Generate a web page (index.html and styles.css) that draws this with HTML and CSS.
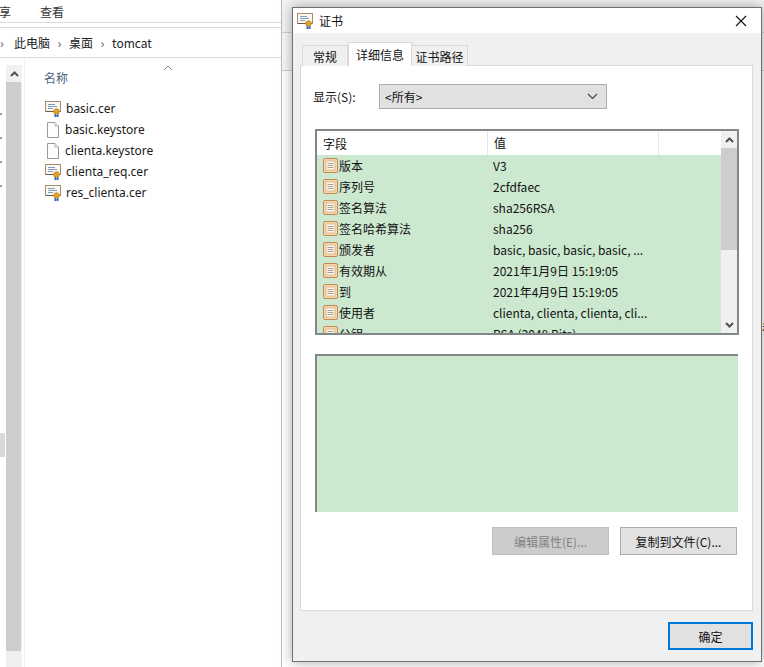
FILE: index.html
```html
<!DOCTYPE html>
<html lang="zh-CN">
<head>
    <meta charset="UTF-8">
    <title>证书</title>
    <link rel="stylesheet" href="styles.css">
</head>
<body>
    <svg class="defs" width="0" height="0">
        <symbol id="cert" viewBox="0 0 17 17">
            <rect x="0.5" y="1.5" width="15" height="10" fill="#fbf8f2" stroke="#a58a6b"/>
            <path d="M1 11.5h14" stroke="#6d5a45"/>
            <path d="M3 4.5h7M3 6.5h9M3 8.5h5" stroke="#7f9cc4"/>
            <path d="M10 13v4l1.500-1 0 0M13 13v4l-1.500-1" fill="#2f63b5" stroke="#2f63b5"/>
            <circle cx="11.500" cy="11.500" r="2.800" fill="#e0a526" stroke="#b57f14" stroke-width="0.700"/>
        </symbol>
        <symbol id="page" viewBox="0 0 16 16">
            <path d="M2.500 0.500h7.500l3.500 3.500v11.500h-11z" fill="#fdfdfd" stroke="#9a9a9a"/>
            <path d="M10 0.500v3.500h3.500" fill="#eee" stroke="#b5b5b5"/>
        </symbol>
        <symbol id="field" viewBox="0 0 15 15">
            <rect x="0.500" y="0.500" width="14" height="14" rx="1.500" fill="#f7d6ae" stroke="#c08a55"/>
            <rect x="3" y="3" width="9" height="9" fill="#fdf8ef" stroke="#d9ae80" stroke-width="0.800"/>
            <path d="M4.500 5.500h6M4.500 7.500h6M4.500 9.500h6" stroke="#a8a08f"/>
        </symbol>
    </svg>

    <div class="desktop">
        <div class="explorer">
            <div class="menu"><span class="menu-cut">享</span><span>查看</span></div>
            <div class="ribbon-gap"></div>
            <div class="crumbs">
                <span class="sep">›</span><span>此电脑</span>
                <span class="sep">›</span><span>桌面</span>
                <span class="sep">›</span><span>tomcat</span>
            </div>
            <div class="browse">
                <div class="nav">
                    <span class="nav-dot"></span>
                    <span class="nav-dot"></span>
                    <span class="nav-dot"></span>
                    <span class="nav-dot"></span>
                    <span class="nav-sel"></span>
                </div>
                <div class="tree-scroll">
                    <div class="tree-up"><svg width="9" height="6" viewBox="0 0 9 6"><path d="M1 5l3.500-3.500L8 5" fill="none" stroke="#505050" stroke-width="2"/></svg></div>
                    <div class="tree-thumb"></div>
                    <div class="tree-down"></div>
                </div>
                <div class="files">
                    <div class="files-head">
                        <span>名称</span>
                        <svg class="sort" width="10" height="6" viewBox="0 0 10 6"><path d="M1 5l4-4 4 4" fill="none" stroke="#8a8a8a"/></svg>
                    </div>
                    <div class="file"><svg width="17" height="17"><use href="#cert"/></svg>basic.cer</div>
                    <div class="file"><svg width="16" height="16"><use href="#page"/></svg>basic.keystore</div>
                    <div class="file"><svg width="16" height="16"><use href="#page"/></svg>clienta.keystore</div>
                    <div class="file"><svg width="17" height="17"><use href="#cert"/></svg>clienta_req.cer</div>
                    <div class="file"><svg width="17" height="17"><use href="#cert"/></svg>res_clienta.cer</div>
                </div>
            </div>
        </div>
        <div class="back-window">
            <div class="back-top"></div>
            <div class="back-mid"></div>
            <div class="back-rest"><span class="back-clip">看</span></div>
        </div>

        <div class="dialog">
            <div class="titlebar">
                <svg class="title-icon" width="17" height="17"><use href="#cert"/></svg>
                <span class="title-text">证书</span>
                <svg class="close" width="12" height="12" viewBox="0 0 12 12"><path d="M1 1l10 10M11 1L1 11" stroke="#111" stroke-width="1.100"/></svg>
            </div>
            <div class="dialog-body">
                <div class="tabs">
                    <span class="tab tab-first">常规</span>
                    <span class="tab tab-on">详细信息</span>
                    <span class="tab tab-last">证书路径</span>
                </div>
                <div class="panel">
                    <div class="show-row">
                        <span class="show-label">显示(S):</span>
                        <div class="select">
                            <span>&lt;所有&gt;</span>
                            <svg width="11" height="7" viewBox="0 0 11 7"><path d="M1 1l4.500 4.500L10 1" fill="none" stroke="#444" stroke-width="1.200"/></svg>
                        </div>
                    </div>
                    <div class="list">
                        <div class="list-main">
                            <div class="list-head">
                                <span class="col-a">字段</span>
                                <span class="col-b">值</span>
                                <span class="col-c"></span>
                            </div>
                            <div class="rows">
                                <div class="row"><span class="col-a"><svg width="15" height="15"><use href="#field"/></svg>版本</span><span class="col-b">V3</span></div>
                                <div class="row"><span class="col-a"><svg width="15" height="15"><use href="#field"/></svg>序列号</span><span class="col-b">2cfdfaec</span></div>
                                <div class="row"><span class="col-a"><svg width="15" height="15"><use href="#field"/></svg>签名算法</span><span class="col-b">sha256RSA</span></div>
                                <div class="row"><span class="col-a"><svg width="15" height="15"><use href="#field"/></svg>签名哈希算法</span><span class="col-b">sha256</span></div>
                                <div class="row"><span class="col-a"><svg width="15" height="15"><use href="#field"/></svg>颁发者</span><span class="col-b">basic, basic, basic, basic, ...</span></div>
                                <div class="row"><span class="col-a"><svg width="15" height="15"><use href="#field"/></svg>有效期从</span><span class="col-b">2021年1月9日 15:19:05</span></div>
                                <div class="row"><span class="col-a"><svg width="15" height="15"><use href="#field"/></svg>到</span><span class="col-b">2021年4月9日 15:19:05</span></div>
                                <div class="row"><span class="col-a"><svg width="15" height="15"><use href="#field"/></svg>使用者</span><span class="col-b">clienta, clienta, clienta, cli...</span></div>
                                <div class="row"><span class="col-a"><svg width="15" height="15"><use href="#field"/></svg>公钥</span><span class="col-b">RSA (2048 Bits)</span></div>
                            </div>
                        </div>
                        <div class="vscroll">
                            <div class="vbtn"><svg width="9" height="6" viewBox="0 0 9 6"><path d="M1 5l3.500-3.500L8 5" fill="none" stroke="#505050" stroke-width="2"/></svg></div>
                            <div class="vthumb"></div>
                            <div class="vtrack"></div>
                            <div class="vbtn"><svg width="9" height="6" viewBox="0 0 9 6"><path d="M1 1l3.500 3.500L8 1" fill="none" stroke="#505050" stroke-width="2"/></svg></div>
                        </div>
                    </div>
                    <div class="detail"></div>
                    <div class="panel-btns">
                        <span class="btn btn-off">编辑属性(E)...</span>
                        <span class="btn">复制到文件(C)...</span>
                    </div>
                </div>
                <div class="dialog-foot">
                    <span class="btn btn-ok">确定</span>
                </div>
            </div>
        </div>
    </div>
</body>
</html>
```

FILE: styles.css
```css
html, body {
    margin: 0;
    height: 100%;
    background: #fff;
    overflow: hidden;
}

body {
    font-family: "Noto Sans CJK SC", "Noto Sans", sans-serif;
    font-size: 12px;
    color: #111;
}

.defs {
    display: block;
    height: 0;
}

.desktop {
    position: relative;
    display: flex;
    width: 764px;
    height: 667px;
    overflow: hidden;
}

/* explorer behind the dialog */
.explorer {
    width: 281px;
    height: 667px;
    flex: none;
    display: flex;
    flex-direction: column;
    border-right: 1px solid #bdbdbd;
}

.menu {
    height: 22px;
    display: flex;
    gap: 29px;
    align-items: center;
    padding-left: 0;
    margin-left: -1px;
    border-bottom: 1px solid #d9d9d9;
    font-size: 12px;
    color: #333;
}

.ribbon-gap {
    height: 4px;
    border-bottom: 1px solid #d9d9d9;
}

.crumbs {
    height: 29px;
    display: flex;
    align-items: center;
    padding-left: 14px;
    border-bottom: 1px solid #d9d9d9;
    font-size: 12px;
    color: #222;
}

.crumbs .sep {
    width: 19px;
    margin-left: 0;
    text-align: center;
    color: #777;
    font-weight: bold;
}

.crumbs .sep:first-child {
    width: 0;
    margin-left: -14px;
    margin-right: 14px;
}

.browse {
    flex: 1;
    display: flex;
    min-height: 0;
}

.nav {
    width: 6px;
    flex: none;
    position: relative;
    display: flex;
    flex-direction: column;
    gap: 22px;
    padding-top: 55px;
}

.nav-dot {
    width: 2px;
    height: 2px;
    background: #999;
}

.nav-sel {
    position: absolute;
    left: 0;
    top: 375px;
    width: 5px;
    height: 24px;
    background: #d9d9d9;
}

.tree-scroll {
    width: 16px;
    flex: none;
    margin-top: 7px;
    display: flex;
    flex-direction: column;
    background: #f0f0f0;
}

.tree-up {
    height: 17px;
    display: flex;
    align-items: center;
    justify-content: center;
}

.tree-thumb {
    flex: 1;
    margin-right: 1px;
    background: #cdcdcd;
}

.tree-down {
    height: 16px;
}

.files {
    flex: 1;
    margin-left: 2px;
    padding-left: 19px;
    border-left: 1px solid #f0f0f0;
    position: relative;
}

.files-head {
    height: 40px;
    padding-top: 11px;
    box-sizing: border-box;
    color: #4c607a;
    line-height: 18px;
}

.sort {
    position: absolute;
    left: 138px;
    top: 7px;
}

.file {
    height: 21px;
    display: flex;
    align-items: center;
    gap: 4px;
    padding-left: 1px;
    font-family: "Noto Sans", sans-serif;
    font-size: 12px;
    color: #1a1a1a;
}

.file svg {
    flex: none;
}

.back-window {
    flex: 1;
    display: flex;
    flex-direction: column;
}

.back-top {
    height: 32px;
    background: #f3f3f3;
    border-bottom: 1px solid #d0d0d0;
}

.back-mid {
    height: 37px;
    background: #f7f7f7;
    border-bottom: 1px solid #d0d0d0;
}

.back-rest {
    flex: 1;
    position: relative;
    overflow: hidden;
}

.back-clip {
    position: absolute;
    right: -10px;
    top: 248px;
}

/* certificate dialog, floats over the other windows */
.dialog {
    position: absolute;
    left: 292px;
    top: 7px;
    width: 470px;
    height: 655px;
    box-sizing: border-box;
    border: 1px solid #707070;
    background: #fff;
    box-shadow: 0 0 12px rgba(0, 0, 0, 0.35);
    display: flex;
    flex-direction: column;
}

.titlebar {
    height: 25px;
    display: flex;
    align-items: center;
    padding: 0 14px 0 4px;
}

.title-icon {
    margin-right: 5px;
}

.title-text {
    flex: 1;
    font-size: 12px;
}

.dialog-body {
    flex: 1;
    background: #f0f0f0;
    padding: 9px 8px 0 7px;
    display: flex;
    flex-direction: column;
}

.tabs {
    height: 24px;
    display: flex;
    align-items: flex-end;
    padding-left: 2px;
    margin-bottom: -1px;
    position: relative;
}

.tab {
    height: 21px;
    box-sizing: border-box;
    border: 1px solid #d9d9d9;
    border-bottom: none;
    background: #f0f0f0;
    display: flex;
    align-items: center;
    justify-content: center;
}

.tab-first {
    width: 46px;
}

.tab-on {
    width: 64px;
    height: 24px;
    background: #fff;
    border-bottom: 1px solid #fff;
    position: relative;
    z-index: 1;
}

.tab-last {
    width: 56px;
    border-left: none;
}

.panel {
    height: 546px;
    box-sizing: border-box;
    background: #fff;
    border: 1px solid #d9d9d9;
    padding: 18px 13px 0 12px;
    display: flex;
    flex-direction: column;
}

.show-row {
    height: 25px;
    display: flex;
    align-items: center;
}

.show-label {
    width: 66px;
    flex: none;
}

.select {
    width: 228px;
    height: 25px;
    box-sizing: border-box;
    background: #e1e1e1;
    border: 1px solid #adadad;
    display: flex;
    align-items: center;
    justify-content: space-between;
    padding: 0 8px 0 5px;
}

.list {
    width: 424px;
    height: 206px;
    margin: 20px 0 0 2px;
    box-sizing: border-box;
    border: 2px solid #82878a;
    border-right-width: 2px;
    display: flex;
    background: #fff;
}

.list-main {
    flex: 1;
    min-width: 0;
    overflow: hidden;
}

.list-head {
    height: 24px;
    display: flex;
    align-items: center;
    font-size: 12px;
}

.list-head .col-b {
    border-left: 1px solid #e5e5e5;
    border-right: 1px solid #e5e5e5;
    height: 24px;
    line-height: 23px;
}

.col-a {
    width: 170px;
    flex: none;
    box-sizing: border-box;
    padding-left: 6px;
    display: flex;
    align-items: center;
    gap: 1px;
}

.col-b {
    width: 172px;
    flex: none;
    box-sizing: border-box;
    padding-left: 6px;
}

.rows {
    background: #cce8cf;
    height: 178px;
}

.row {
    height: 21px;
    display: flex;
    align-items: center;
    white-space: nowrap;
}

.row svg {
    flex: none;
}

.vscroll {
    width: 16px;
    flex: none;
    display: flex;
    flex-direction: column;
    background: #f0f0f0;
}

.vbtn {
    height: 17px;
    display: flex;
    align-items: center;
    justify-content: center;
}

.vthumb {
    height: 102px;
    background: #cdcdcd;
}

.vtrack {
    flex: 1;
}

.detail {
    width: 423px;
    height: 158px;
    margin: 19px 0 0 2px;
    box-sizing: border-box;
    background: #cce8cf;
    border-top: 2px solid #82878a;
    border-left: 2px solid #82878a;
}

.panel-btns {
    display: flex;
    justify-content: flex-end;
    gap: 11px;
    margin: 15px 2px 0 0;
}

.btn {
    width: 117px;
    height: 28px;
    box-sizing: border-box;
    background: #e1e1e1;
    border: 1px solid #adadad;
    display: flex;
    align-items: center;
    justify-content: center;
}

.btn-off {
    background: #cccccc;
    border-color: #bfbfbf;
    color: #838383;
}

.dialog-foot {
    display: flex;
    justify-content: flex-end;
    padding-top: 11px;
}

.btn-ok {
    width: 85px;
    border: 2px solid #0078d7;
}
```
